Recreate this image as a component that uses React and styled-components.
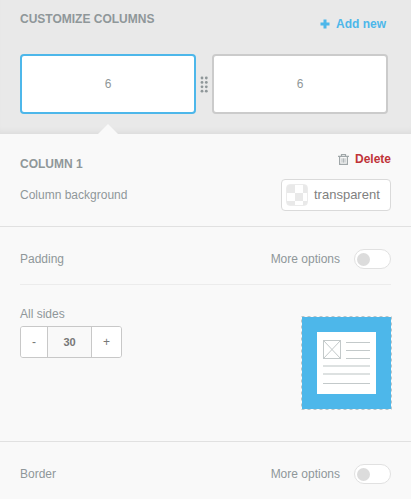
import { useState } from "react";
import styled, { createGlobalStyle } from "styled-components";

const GlobalStyle = createGlobalStyle`
  * {
    box-sizing: border-box;
  }

  body {
    margin: 0;
    background: #f9f9f9;
    color: #8f9799;
    font-family: "Liberation Sans", Arial, sans-serif;
    font-size: 12px;
    line-height: 16px;
  }

  button,
  input {
    font: inherit;
    color: inherit;
    margin: 0;
    padding: 0;
  }
`;

const Header = styled.header`
  padding: 11px 20px 20px;
  background: #e9e9e9;
  box-shadow: inset 0 -6px 6px -4px rgba(0, 0, 0, 0.06);
`;

const HeaderTop = styled.div`
  display: flex;
  justify-content: space-between;
  align-items: flex-start;
  height: 43px;
  padding-right: 5px;
`;

const Title = styled.h2`
  margin: 0;
  font-size: 12px;
  font-weight: bold;
  line-height: 16px;
`;

const TextButton = styled.button`
  display: inline-flex;
  align-items: center;
  gap: 6px;
  border: 0;
  background: none;
  color: ${({ $color }) => $color};
  font-weight: bold;
  line-height: 16px;
  cursor: pointer;
`;

const AddButton = styled(TextButton)`
  margin-top: 5px;
`;

const Columns = styled.div`
  display: flex;
  padding-right: 3px;
`;

const ColumnButton = styled.button`
  position: relative;
  flex: 1;
  height: 60px;
  border: 2px solid ${({ $active }) => ($active ? "#4db7ea" : "#cbcbcb")};
  border-radius: 4px;
  background: #fff;
  cursor: pointer;

  &::after {
    content: "";
    display: ${({ $active }) => ($active ? "block" : "none")};
    position: absolute;
    top: 68px;
    left: 50%;
    margin-left: -10px;
    border: 10px solid transparent;
    border-top: 0;
    border-bottom-color: #f9f9f9;
  }
`;

const Handle = styled.span`
  display: flex;
  align-items: center;
  justify-content: center;
  width: 16px;
  cursor: col-resize;
`;

const Section = styled.section`
  padding: 0 20px;
  border-bottom: 1px solid #e1e1e1;

  &:last-child {
    border-bottom: 0;
  }
`;

const ColumnSection = styled(Section)`
  padding-top: 17px;
  padding-bottom: 15px;
`;

const ColumnTop = styled.div`
  display: flex;
  justify-content: space-between;
  height: 28px;

  h2 {
    margin-top: 5px;
  }

  button {
    align-self: flex-start;
  }
`;

const Row = styled.div`
  display: flex;
  align-items: center;
  justify-content: space-between;
`;

const OptionRow = styled(Row)`
  padding: 22px 0 15px;
  border-bottom: ${({ $divided }) => ($divided ? "1px solid #ececec" : "0")};
`;

const SwitchLabel = styled.label`
  display: flex;
  align-items: center;
  gap: 14px;
  cursor: pointer;
`;

const Switch = styled.input`
  appearance: none;
  width: 37px;
  height: 20px;
  padding: 3px 2px;
  border: 1px solid #e1e1e1;
  border-radius: 10px;
  background: #fff;
  cursor: pointer;

  &::before {
    content: "";
    display: block;
    width: 13px;
    height: 13px;
    border-radius: 50%;
    background: #dcdcdc;
  }

  &:checked::before {
    margin-left: auto;
    background: #4db7ea;
  }
`;

const ColorButton = styled.button`
  display: flex;
  align-items: center;
  gap: 6px;
  width: 110px;
  height: 32px;
  padding-left: 4px;
  border: 1px solid #dadada;
  border-radius: 4px;
  background: #fff;
  color: #808080;
  font-size: 13px;
  cursor: pointer;
`;

const Swatch = styled.span`
  width: 22px;
  height: 22px;
  border: 1px solid #ececec;
  border-radius: 4px;
  background: repeating-conic-gradient(#fff 0 25%, #e9e9e9 0 50%) 0 0 / 16px 16px;
`;

const PaddingBody = styled.div`
  display: flex;
  justify-content: space-between;
  align-items: flex-start;
  padding: 21px 0 32px;
`;

const Field = styled.div`
  display: flex;
  flex-direction: column;
  gap: 4px;
`;

const Stepper = styled.div`
  display: flex;
  width: 102px;
  height: 32px;
  border: 1px solid #c8c8c8;
  border-radius: 3px;
  overflow: hidden;
`;

const StepButton = styled.button`
  width: ${({ $width }) => $width}px;
  border: 0;
  background: #fff;
  color: #777;
  cursor: pointer;
`;

const StepInput = styled.input`
  width: 45px;
  border: solid #c8c8c8;
  border-width: 0 1px;
  border-radius: 0;
  background: #f9f9f9;
  color: #777;
  font-size: 11px;
  font-weight: bold;
  text-align: center;
`;

const Preview = styled.svg`
  display: block;
  margin-top: 11px;
  overflow: visible;
`;

function PlusIcon() {
  return (
    <svg width="10" height="10" viewBox="0 0 10 10" aria-hidden="true">
      <path d="M3.5 0.5h3v3h3v3h-3v3h-3v-3h-3v-3h3z" fill="#4db7ea" />
    </svg>
  );
}

function TrashIcon() {
  return (
    <svg width="11" height="11" viewBox="0 0 11 11" fill="none" stroke="#a0a7a9" aria-hidden="true">
      <path d="M0 2.3h11M3.5 2v-1.5h4V2M1.6 2.5v7.9h7.8V2.5" strokeWidth="1.2" />
      <path d="M4 4.3v4.4M5.5 4.3v4.4M7 4.3v4.4" strokeWidth="0.8" />
    </svg>
  );
}

function DragDots() {
  return (
    <svg width="8" height="17" viewBox="0 0 8 17" fill="#8f9799" aria-hidden="true">
      {[2, 6.3].map((x) =>
        [2, 6.4, 10.8, 15.2].map((y) => <circle key={`${x}-${y}`} cx={x} cy={y} r="1.4" />)
      )}
    </svg>
  );
}

function PaddingPreview() {
  return (
    <Preview width="89" height="92" viewBox="0 0 89 92" aria-hidden="true">
      <rect width="89" height="92" fill="#4db7ea" />
      <rect x="-0.5" y="-0.5" width="90" height="93" fill="none" stroke="#f9f9f9" />
      <rect x="-0.5" y="-0.5" width="90" height="93" fill="none" stroke="#bcc4c6" strokeDasharray="3 3" />
      <rect x="15" y="15" width="59" height="62" fill="#fff" />
      <g fill="none" stroke="#c3c9ca">
        <rect x="21.5" y="23.5" width="17" height="18" />
        <path d="M21.5 23.5l17 18M38.5 23.5l-17 18" />
        <path d="M44 25.5h24M44 33.5h24M44 41.5h24M21 66.5h47" />
      </g>
      <path d="M21 49h47M21 57h47" stroke="#dde1e1" strokeWidth="2" />
    </Preview>
  );
}

function MoreOptions() {
  return (
    <SwitchLabel>
      More options
      <Switch type="checkbox" />
    </SwitchLabel>
  );
}

export default function App() {
  const [active, setActive] = useState(0);
  const [padding, setPadding] = useState(30);

  return (
    <>
      <GlobalStyle />
      <Header>
        <HeaderTop>
          <Title>CUSTOMIZE COLUMNS</Title>
          <AddButton type="button" $color="#4db7ea">
            <PlusIcon />
            Add new
          </AddButton>
        </HeaderTop>
        <Columns>
          <ColumnButton type="button" $active={active === 0} onClick={() => setActive(0)}>
            6
          </ColumnButton>
          <Handle>
            <DragDots />
          </Handle>
          <ColumnButton type="button" $active={active === 1} onClick={() => setActive(1)}>
            6
          </ColumnButton>
        </Columns>
      </Header>

      <main>
        <ColumnSection>
          <ColumnTop>
            <Title>COLUMN {active + 1}</Title>
            <TextButton type="button" $color="#bf3338">
              <TrashIcon />
              Delete
            </TextButton>
          </ColumnTop>
          <Row>
            <span id="background-label">Column background</span>
            <ColorButton type="button" aria-describedby="background-label">
              <Swatch />
              transparent
            </ColorButton>
          </Row>
        </ColumnSection>

        <Section>
          <OptionRow $divided>
            <span>Padding</span>
            <MoreOptions />
          </OptionRow>
          <PaddingBody>
            <Field>
              <label htmlFor="all-sides">All sides</label>
              <Stepper>
                <StepButton type="button" $width={26} onClick={() => setPadding(Math.max(0, padding - 1))}>
                  -
                </StepButton>
                <StepInput
                  id="all-sides"
                  type="text"
                  inputMode="numeric"
                  value={padding}
                  onChange={(e) => setPadding(Number(e.target.value) || 0)}
                />
                <StepButton type="button" $width={29} onClick={() => setPadding(padding + 1)}>
                  +
                </StepButton>
              </Stepper>
            </Field>
            <PaddingPreview />
          </PaddingBody>
        </Section>

        <Section>
          <OptionRow>
            <span>Border</span>
            <MoreOptions />
          </OptionRow>
        </Section>
      </main>
    </>
  );
}
